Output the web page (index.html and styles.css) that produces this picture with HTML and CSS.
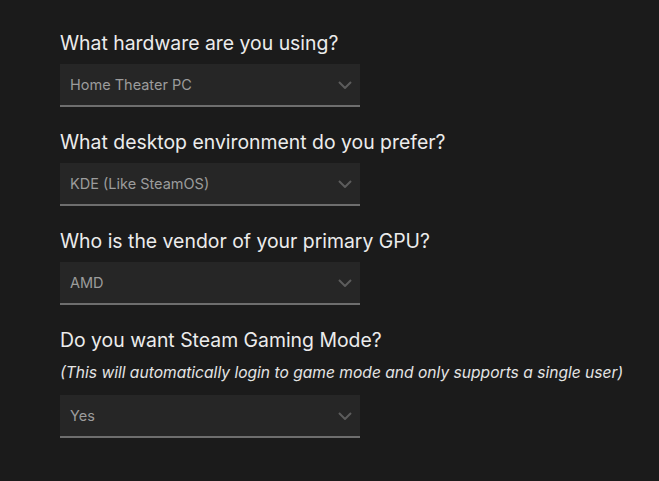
FILE: index.html
```html
<!DOCTYPE html>
<html>
<head>
<meta charset="utf-8">
<link rel="stylesheet" href="styles.css">
</head>
<body>
<main class="form">
  <section class="field">
    <label class="question">What hardware are you using?</label>
    <div class="select"><span class="value">Home Theater PC</span><svg class="chev" width="14" height="8" viewBox="0 0 14 8"><path d="M1 1 L7 7 L13 1" fill="none" stroke="#5c5c5c" stroke-width="2"/></svg></div>
  </section>
  <section class="field">
    <label class="question">What desktop environment do you prefer?</label>
    <div class="select"><span class="value">KDE (Like SteamOS)</span><svg class="chev" width="14" height="8" viewBox="0 0 14 8"><path d="M1 1 L7 7 L13 1" fill="none" stroke="#5c5c5c" stroke-width="2"/></svg></div>
  </section>
  <section class="field">
    <label class="question">Who is the vendor of your primary GPU?</label>
    <div class="select"><span class="value">AMD</span><svg class="chev" width="14" height="8" viewBox="0 0 14 8"><path d="M1 1 L7 7 L13 1" fill="none" stroke="#5c5c5c" stroke-width="2"/></svg></div>
  </section>
  <section class="field">
    <label class="question">Do you want Steam Gaming Mode?</label>
    <p class="note">(This will automatically login to game mode and only supports a single user)</p>
    <div class="select"><span class="value">Yes</span><svg class="chev" width="14" height="8" viewBox="0 0 14 8"><path d="M1 1 L7 7 L13 1" fill="none" stroke="#5c5c5c" stroke-width="2"/></svg></div>
  </section>
</main>
</body>
</html>
```
FILE: styles.css
```css
html, body {
  margin: 0;
  padding: 0;
  background: #1b1b1b;
  height: 100%;
}
body {
  font-family: Inter, "Noto Sans", sans-serif;
  color: #ececec;
}
.form {
  display: flex;
  flex-direction: column;
  gap: 23px;
  padding: 31px 0 0 60px;
}
.field {
  display: flex;
  flex-direction: column;
  align-items: flex-start;
}
.question {
  font-size: 19.4px;
  line-height: 24px;
  margin-bottom: 9px;
}
.note {
  margin: 0 0 10px 0;
  font-size: 15.6px;
  line-height: 24px;
  font-style: italic;
  color: #e4e4e4;
}
.select {
  box-sizing: border-box;
  width: 300px;
  height: 43px;
  background: #262626;
  border-bottom: 2px solid #6e6e6e;
  display: flex;
  align-items: center;
  justify-content: space-between;
  padding: 0 8px 0 10px;
}
.value {
  font-size: 14.5px;
  color: #9c9c9c;
}
.chev {
  display: block;
}
```
